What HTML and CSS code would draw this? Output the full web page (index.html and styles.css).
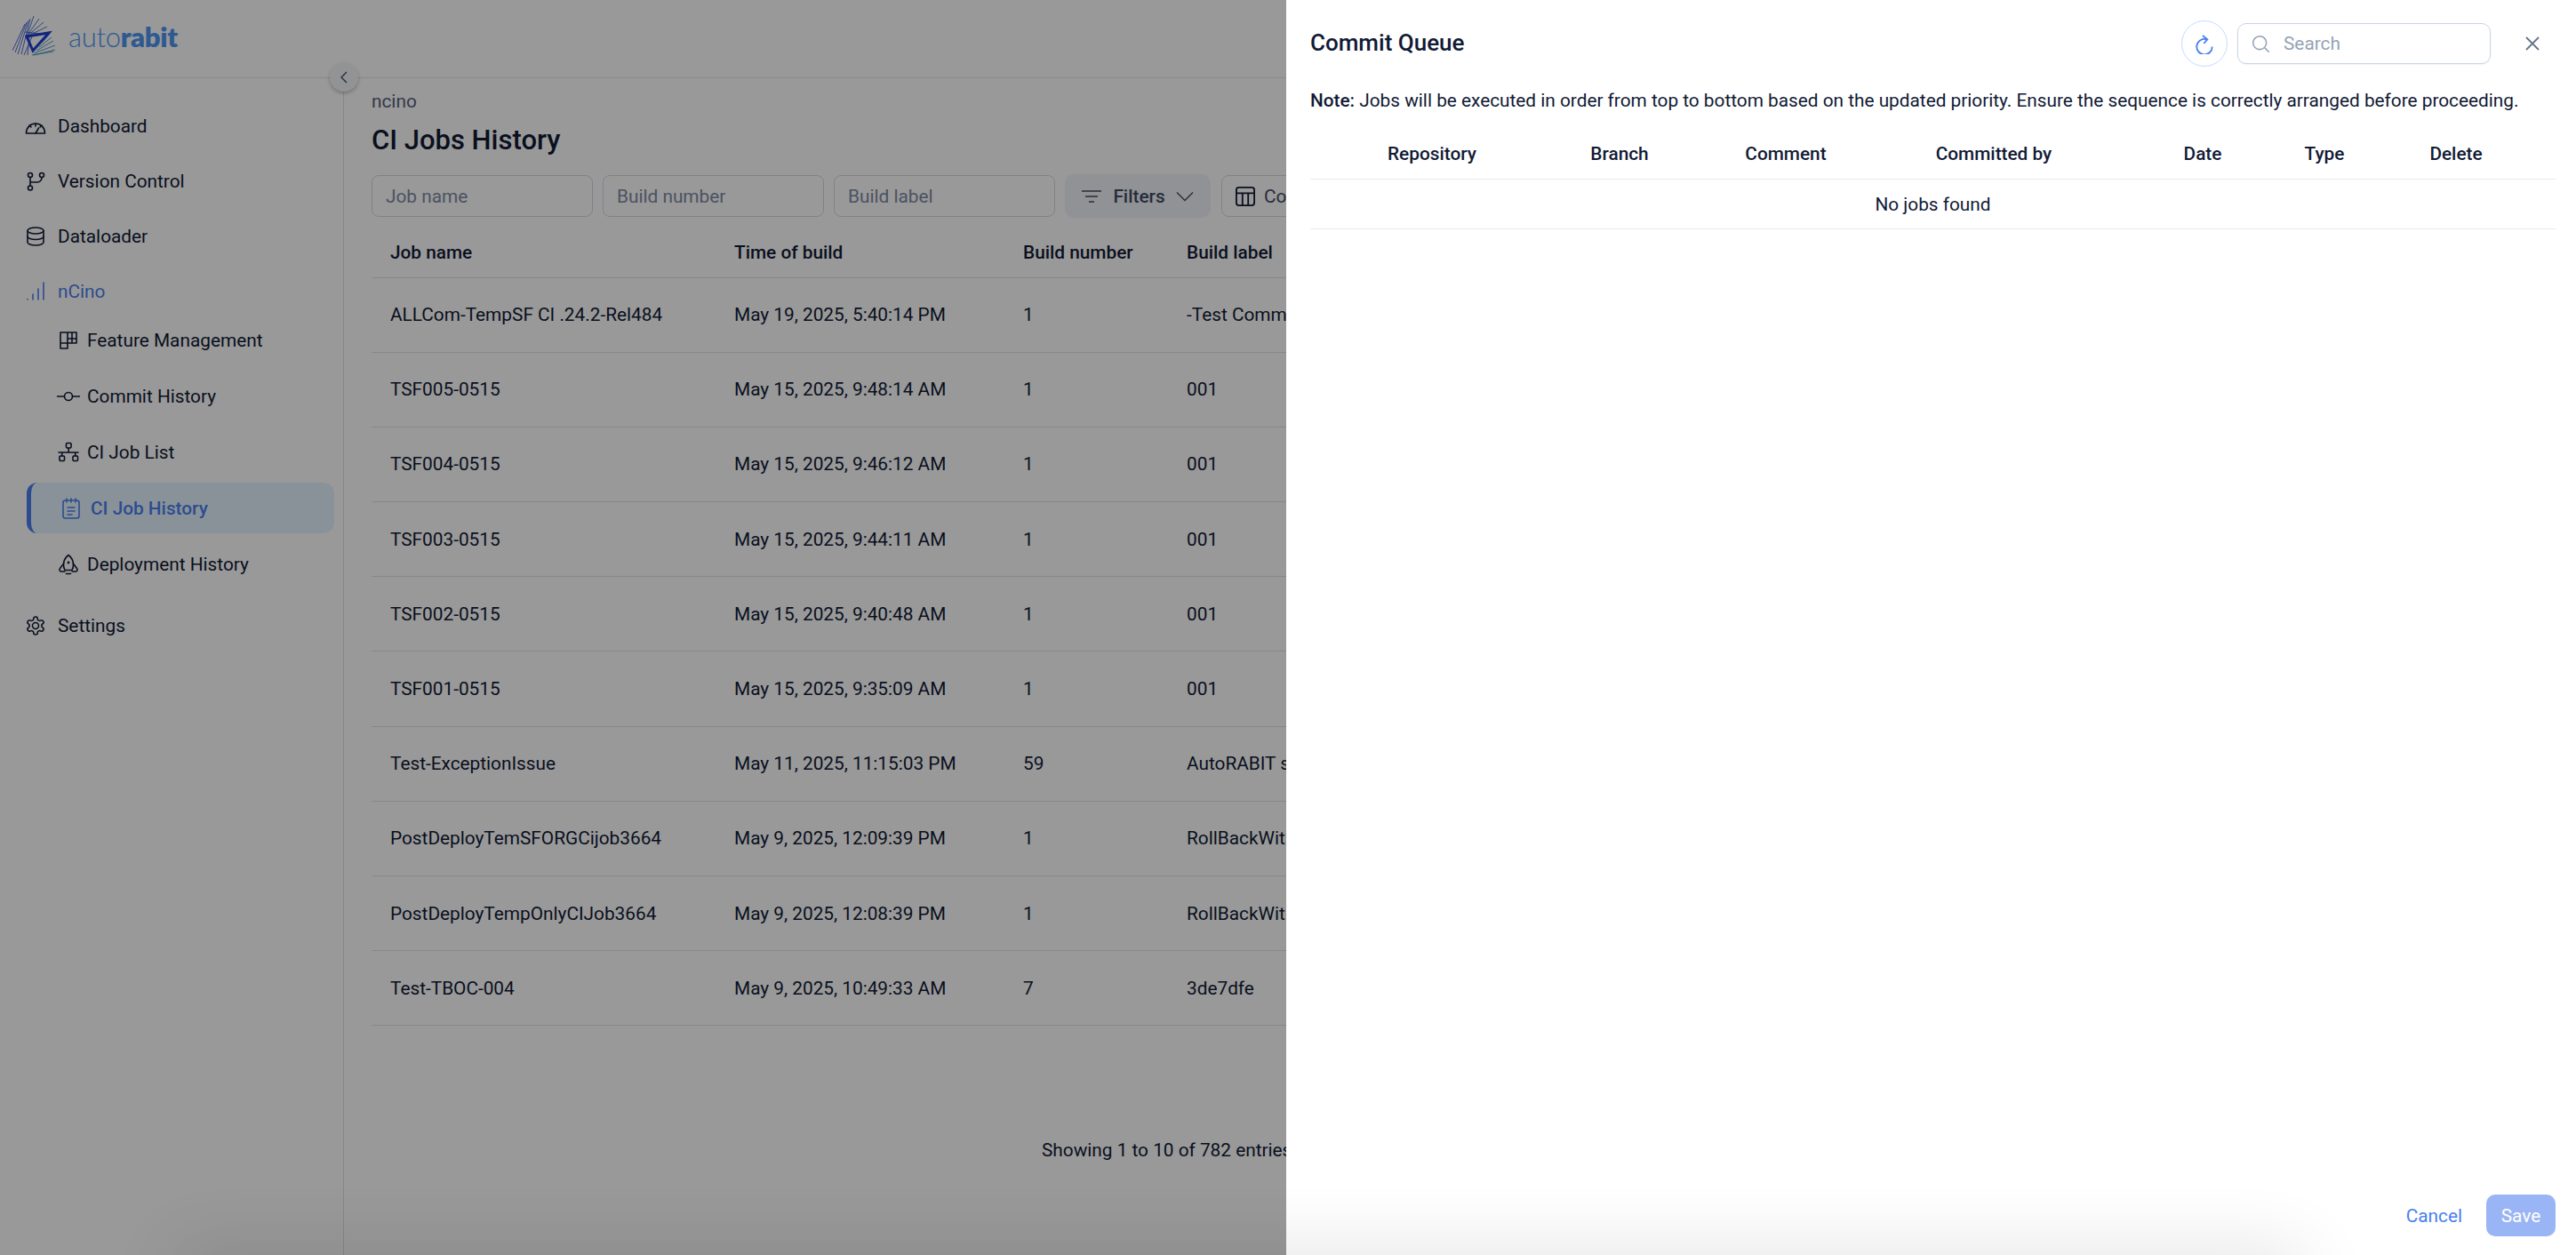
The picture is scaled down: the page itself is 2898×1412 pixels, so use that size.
FILE: index.html
```html
<!DOCTYPE html>
<html lang="en">
<head>
    <meta charset="UTF-8">
    <title>CI Jobs History</title>
    <link rel="stylesheet" href="styles.css">
</head>
<body>
    <div class="app">
        <header class="topbar">
            <svg class="logo-mark" viewBox="0 0 50 46" fill="none" stroke-width="0.8">
                <g stroke="#2547c9">
                    <path d="M0 39 L14 9 M3 41 L16 7 M6 43 L18 5 M10 43 L20 3 M13 44 L23 21 M17 44 L19 23"/>
                </g>
                <g stroke="#2a55c4">
                    <path d="M16 23 L24 0 M16 23 L30 3 M16 23 L35 7 M16 23 L39 12 M16 23 L42 18 M14 18 L41 21"/>
                </g>
                <g stroke="#2f86b8">
                    <path d="M24 44 L48 38 M24 42 L48 33 M27 39 L46 28 M30 35 L44 24 M33 30 L42 20 M22 44 L46 40"/>
                </g>
                <path d="M16 23 L41 19 L23 39 Z" stroke="#1d3fcf" stroke-width="3"/>
            </svg>
            <span class="logo-text">auto<b>rabit</b></span>
        </header>

        <div class="layout">
            <nav class="sidebar">
                <a class="nav-item">
                    <svg class="icon" viewBox="0 0 24 24"><path d="M1.5 19.5a10.5 10.5 0 0 1 21 0v.5h-21z"/><path d="M12 20l3.5-6M5 11l2 2M12 9v3M19 11l-2 2"/></svg>
                    Dashboard
                </a>
                <a class="nav-item">
                    <svg class="icon" viewBox="0 0 24 24"><circle cx="6" cy="5" r="2.5"/><circle cx="6" cy="19.5" r="2.5"/><circle cx="19" cy="5" r="2.5"/><path d="M6 7.5v9.5M6 13h8a5 5 0 0 0 5-5v-.5"/></svg>
                    Version Control
                </a>
                <a class="nav-item">
                    <svg class="icon" viewBox="0 0 24 24"><ellipse cx="12" cy="5.5" rx="9" ry="3.5"/><path d="M3 5.500v13a9 3.500 0 0 0 18 0v-13"/><path d="M3 12a9 3.500 0 0 0 18 0"/></svg>
                    Dataloader
                </a>
                <a class="nav-item nav-group">
                    <svg class="icon" viewBox="0 0 24 24"><path d="M3 21v-.5M9 21v-6M15 21V9M21 21V2"/></svg>
                    nCino
                </a>
                <div class="sub-nav">
                    <a class="sub-item">
                        <svg class="icon" viewBox="0 0 24 24"><path d="M3 3h18v12H3zM3 3v18h8V3M11 10h10M16 3v12"/></svg>
                        Feature Management
                    </a>
                    <a class="sub-item">
                        <svg class="icon icon-wide" viewBox="0 0 26 24"><circle cx="13" cy="12" r="4.500"/><path d="M0.500 12h8M17.500 12h8"/></svg>
                        Commit History
                    </a>
                    <a class="sub-item">
                        <svg class="icon icon-wide" viewBox="0 0 24 24"><rect x="9.500" y="1.500" width="5.500" height="5.500" rx="1"/><rect x="2" y="16" width="5.500" height="5.500" rx="1"/><rect x="17" y="16" width="5.500" height="5.500" rx="1"/><path d="M12.200 7v5M1 12h22M4.700 12v4M19.700 12v4"/></svg>
                        CI Job List
                    </a>
                    <a class="sub-item active">
                        <svg class="icon" viewBox="0 0 24 24"><rect x="3" y="3" width="18" height="20" rx="2.500"/><path d="M7 1v4M12 1v4M17 1v4M8 11h8M8 15h8M8 19h5"/></svg>
                        CI Job History
                    </a>
                    <a class="sub-item">
                        <svg class="icon" viewBox="0 0 24 24"><path d="M12 1.500c4 3 5.500 7 5.500 11 0 2-.5 4-1.500 6H8c-1-2-1.500-4-1.500-6 0-4 1.500-8 5.500-11z"/><path d="M6.700 11L2.500 16.500c-1 1.500-.5 3 1 3.500L8 20M17.300 11l4.200 5.500c1 1.500.5 3-1 3.500L16 20M9.500 22.500h5"/><circle cx="12" cy="10" r="0.600"/></svg>
                        Deployment History
                    </a>
                </div>
                <a class="nav-item nav-settings">
                    <svg class="icon" viewBox="0 0 24 24"><path d="M12.220 2h-.44a2 2 0 0 0-2 2v.18a2 2 0 0 1-1 1.730l-.43.25a2 2 0 0 1-2 0l-.15-.08a2 2 0 0 0-2.730.73l-.22.38a2 2 0 0 0 .73 2.730l.15.1a2 2 0 0 1 1 1.720v.51a2 2 0 0 1-1 1.740l-.15.09a2 2 0 0 0-.73 2.730l.22.38a2 2 0 0 0 2.730.73l.15-.08a2 2 0 0 1 2 0l.43.25a2 2 0 0 1 1 1.730V20a2 2 0 0 0 2 2h.44a2 2 0 0 0 2-2v-.18a2 2 0 0 1 1-1.730l.43-.25a2 2 0 0 1 2 0l.15.08a2 2 0 0 0 2.730-.73l.22-.39a2 2 0 0 0-.73-2.730l-.15-.08a2 2 0 0 1-1-1.740v-.5a2 2 0 0 1 1-1.740l.15-.09a2 2 0 0 0 .73-2.730l-.22-.38a2 2 0 0 0-2.730-.73l-.15.08a2 2 0 0 1-2 0l-.43-.25a2 2 0 0 1-1-1.730V4a2 2 0 0 0-2-2z"/><circle cx="12" cy="12" r="3.500"/></svg>
                    Settings
                </a>
            </nav>

            <main class="content">
                <div class="crumb">ncino</div>
                <h1 class="page-title">CI Jobs History</h1>

                <div class="toolbar">
                    <div class="field">Job name</div>
                    <div class="field">Build number</div>
                    <div class="field">Build label</div>
                    <button class="filter-btn">
                        <svg class="filter-icon" viewBox="0 0 24 24"><path d="M1 6h22M5 12h14M9 18h6"/></svg>
                        Filters
                        <svg class="tool-icon" viewBox="0 0 24 24"><path d="M1.200 6.600L12 17.400 22.800 6.600"/></svg>
                    </button>
                    <button class="columns-btn">
                        <svg class="columns-icon" viewBox="0 0 24 24"><rect x="1" y="1" width="22" height="22" rx="3"/><path d="M1 8h22M8.500 8v15M15.500 8v15"/></svg>
                        Columns
                    </button>
                </div>

                <table class="jobs">
                    <thead>
                        <tr><th>Job name</th><th>Time of build</th><th>Build number</th><th>Build label</th></tr>
                    </thead>
                    <tbody>
                        <tr><td>ALLCom-TempSF CI .24.2-Rel484</td><td>May 19, 2025, 5:40:14 PM</td><td>1</td><td>-Test Commit</td></tr>
                        <tr><td>TSF005-0515</td><td>May 15, 2025, 9:48:14 AM</td><td>1</td><td>001</td></tr>
                        <tr><td>TSF004-0515</td><td>May 15, 2025, 9:46:12 AM</td><td>1</td><td>001</td></tr>
                        <tr><td>TSF003-0515</td><td>May 15, 2025, 9:44:11 AM</td><td>1</td><td>001</td></tr>
                        <tr><td>TSF002-0515</td><td>May 15, 2025, 9:40:48 AM</td><td>1</td><td>001</td></tr>
                        <tr><td>TSF001-0515</td><td>May 15, 2025, 9:35:09 AM</td><td>1</td><td>001</td></tr>
                        <tr><td>Test-ExceptionIssue</td><td>May 11, 2025, 11:15:03 PM</td><td>59</td><td>AutoRABIT sync</td></tr>
                        <tr><td>PostDeployTemSFORGCijob3664</td><td>May 9, 2025, 12:09:39 PM</td><td>1</td><td>RollBackWithCommit</td></tr>
                        <tr><td>PostDeployTempOnlyCIJob3664</td><td>May 9, 2025, 12:08:39 PM</td><td>1</td><td>RollBackWithCommit</td></tr>
                        <tr><td>Test-TBOC-004</td><td>May 9, 2025, 10:49:33 AM</td><td>7</td><td>3de7dfe</td></tr>
                    </tbody>
                </table>

                <div class="table-footer">Showing 1 to 10 of 782 entries</div>
            </main>
        </div>

        <button class="collapse-btn">
            <svg viewBox="0 0 12 16"><path d="M9 2L3 8l6 6"/></svg>
        </button>
    </div>

    <div class="scrim"></div>

    <aside class="drawer">
        <div class="drawer-head">
            <h2 class="drawer-title">Commit Queue</h2>
            <button class="refresh-btn">
                <svg viewBox="0 0 24 24"><path d="M14.500 7.300A8.700 8.700 0 1 0 20.700 15.500"/><path d="M10 3l5.300 4.300L11.300 12"/></svg>
            </button>
            <div class="search">
                <svg viewBox="0 0 24 24"><circle cx="10.500" cy="10.500" r="8.500"/><path d="M17 17l5.500 5.500"/></svg>
                Search
            </div>
            <button class="close-btn">
                <svg viewBox="0 0 16 16"><path d="M1 1l14 14M15 1L1 15"/></svg>
            </button>
        </div>

        <p class="note"><b>Note:</b> Jobs will be executed in order from top to bottom based on the updated priority. Ensure the sequence is correctly arranged before proceeding.</p>

        <div class="queue-head">
            <span>Repository</span>
            <span>Branch</span>
            <span>Comment</span>
            <span>Committed by</span>
            <span>Date</span>
            <span>Type</span>
            <span>Delete</span>
        </div>
        <div class="queue-empty">No jobs found</div>

        <div class="drawer-foot">
            <button class="cancel-btn">Cancel</button>
            <button class="save-btn">Save</button>
        </div>
    </aside>

    <div class="bottom-shade"></div>
</body>
</html>
```

FILE: styles.css
```css
* {
    box-sizing: border-box;
    margin: 0;
    padding: 0;
}

body {
    height: 100vh;
    overflow: hidden;
    background-color: #fff;
    color: #111a35;
    font-family: Roboto, "Liberation Sans", sans-serif;
    font-size: 20.8px;
}

button {
    font-family: inherit;
    border: none;
    background: none;
}

/* page behind the drawer */
.app {
    height: 100%;
    display: flex;
    flex-direction: column;
}

.topbar {
    height: 88px;
    flex-shrink: 0;
    display: flex;
    align-items: center;
    padding: 0 0 6px 14px;
    border-bottom: 1px solid #e2e4e8;
}

.logo-mark {
    width: 50px;
    height: 46px;
}

.logo-text {
    margin-left: 13px;
    font-family: Lato, sans-serif;
    font-size: 31px;
    font-weight: 300;
    letter-spacing: -0.3px;
    color: #4f96f0;
}

.logo-text b {
    font-weight: 800;
}

.layout {
    flex: 1;
    display: flex;
    min-height: 0;
}

.sidebar {
    width: 387px;
    flex-shrink: 0;
    padding: 23px 10px 0 30px;
    border-right: 1px solid #dfe1e5;
}

.icon {
    width: 24px;
    height: 24px;
    flex-shrink: 0;
    fill: none;
    stroke: currentColor;
    stroke-width: 1.6;
    stroke-linecap: round;
    stroke-linejoin: round;
}

.icon-wide {
    width: 26px;
    margin: 0 -1px;
}

.nav-item {
    height: 62px;
    display: flex;
    align-items: center;
    gap: 13px;
    margin-left: -2px;
    color: #111a35;
}

.nav-group {
    height: 50px;
    margin-top: 6px;
    color: #4a7ff0;
}

.nav-settings {
    margin-top: 10px;
}

.sub-nav {
    display: flex;
    flex-direction: column;
    gap: 6px;
    margin-top: 1px;
}

.sub-item {
    height: 57px;
    display: flex;
    align-items: center;
    gap: 9px;
    padding-left: 35px;
    color: #111a35;
}

.sub-item.active {
    gap: 10px;
    padding-left: 33px;
    border-left: 5px solid #4a7ff0;
    border-radius: 12px;
    background-color: #e6f4ff;
    color: #4a7ff0;
    font-weight: 500;
}

.content {
    flex: 1;
    min-width: 0;
    padding: 14px 0 0 31px;
}

.crumb {
    line-height: 24px;
    color: #55607a;
}

.page-title {
    margin-top: 12px;
    font-size: 31px;
    font-weight: 500;
    line-height: 40px;
}

.toolbar {
    display: flex;
    align-items: center;
    gap: 11px;
    margin-top: 18px;
    width: 1400px;
}

.field {
    width: 249px;
    height: 47px;
    display: flex;
    align-items: center;
    padding-left: 15px;
    border: 1px solid #d3dbe6;
    border-radius: 8px;
    color: #7d8aa3;
}

.filter-btn,
.columns-btn {
    display: flex;
    align-items: center;
    font-size: 20.8px;
    color: #3f4a63;
}

.filter-btn {
    width: 164px;
    height: 49px;
    padding: 0 19px 0 18px;
    justify-content: space-between;
    border-radius: 10px;
    background-color: #f0f3f8;
    font-weight: 500;
}

.columns-btn {
    width: 180px;
    height: 47px;
    gap: 10px;
    margin-left: 1px;
    padding-left: 15px;
    border: 1px solid #d3dbe6;
    border-radius: 8px;
}

.filter-icon {
    width: 24px;
    height: 24px;
    flex-shrink: 0;
    fill: none;
    stroke: currentColor;
    stroke-width: 1.400;
}

.tool-icon {
    width: 20px;
    height: 20px;
    flex-shrink: 0;
    fill: none;
    stroke: currentColor;
    stroke-width: 1.600;
}

.columns-icon {
    width: 22px;
    height: 22px;
    flex-shrink: 0;
    fill: none;
    stroke: #111a35;
    stroke-width: 2;
}

.jobs {
    margin-top: 17px;
    width: 1400px;
    table-layout: fixed;
    border-collapse: collapse;
}

.jobs th,
.jobs td {
    padding: 0 21px;
    text-align: left;
    border-bottom: 1px solid #dfe1e5;
    white-space: nowrap;
}

.jobs th {
    height: 50px;
    padding-bottom: 6px;
    font-weight: 500;
}

.jobs td {
    height: 84.2px;
}

.jobs th:nth-child(1) {
    width: 387px;
}

.jobs th:nth-child(2) {
    width: 325px;
}

.jobs th:nth-child(3) {
    width: 184px;
}

.table-footer {
    margin-top: 128px;
    padding-left: 754px;
    line-height: 24px;
}

.collapse-btn {
    position: absolute;
    left: 371px;
    top: 71px;
    width: 32px;
    height: 32px;
    display: flex;
    align-items: center;
    justify-content: center;
    border-radius: 50%;
    background-color: #f4f6f9;
    box-shadow: 0 2px 4px rgba(0, 0, 0, 0.25);
}

.collapse-btn svg {
    width: 12px;
    height: 16px;
    fill: none;
    stroke: #3f4a63;
    stroke-width: 1.400;
}

/* overlay */
.scrim {
    position: absolute;
    inset: 0;
    background-color: rgba(0, 0, 0, 0.4);
}

.drawer {
    position: absolute;
    top: 0;
    right: 0;
    bottom: 0;
    width: 1451px;
    display: flex;
    flex-direction: column;
    padding: 0 23px 21px 27px;
    background-color: #fff;
}

.drawer-head {
    height: 98px;
    flex-shrink: 0;
    display: flex;
    align-items: center;
}

.drawer-title {
    flex: 1;
    padding-bottom: 2px;
    font-size: 26px;
    font-weight: 500;
}

.refresh-btn {
    width: 52px;
    height: 52px;
    display: flex;
    align-items: center;
    justify-content: center;
    border: 1px solid #c5dcff;
    border-radius: 50%;
}

.refresh-btn svg {
    width: 24px;
    height: 24px;
    fill: none;
    stroke: #4a7ff0;
    stroke-width: 1.800;
}

.search {
    width: 285px;
    height: 46px;
    margin-left: 11px;
    display: flex;
    align-items: center;
    gap: 15px;
    padding-left: 15px;
    border: 1px solid #c9d4e3;
    border-radius: 10px;
    box-shadow: 0 1px 2px rgba(15, 23, 42, 0.06);
    color: #94a3b8;
}

.search svg {
    width: 21px;
    height: 21px;
    flex-shrink: 0;
    fill: none;
    stroke: #94a3b8;
    stroke-width: 1.800;
}

.close-btn {
    width: 24px;
    height: 24px;
    margin: 0 14px 0 35px;
    display: flex;
    align-items: center;
    justify-content: center;
}

.close-btn svg {
    width: 16px;
    height: 16px;
    fill: none;
    stroke: #64748b;
    stroke-width: 1.800;
}

.note {
    line-height: 30px;
    margin-bottom: 26px;
}

.note b {
    font-weight: 500;
}

.queue-head {
    height: 48px;
    flex-shrink: 0;
    display: grid;
    grid-template-columns: 246px 176px 198px 270px 200px 74px 222px;
    padding: 0 0 10px 14px;
    align-items: center;
    justify-items: center;
    border-bottom: 1px solid #e8eaee;
    font-weight: 500;
}

.queue-empty {
    height: 56px;
    flex-shrink: 0;
    display: flex;
    align-items: center;
    justify-content: center;
    border-bottom: 1px solid #e8eaee;
}

.drawer-foot {
    margin-top: auto;
    display: flex;
    align-items: center;
    justify-content: flex-end;
    gap: 27px;
}

.cancel-btn {
    font-size: 20.8px;
    color: #4a7ff0;
}

.save-btn {
    width: 78px;
    height: 47px;
    border-radius: 10px;
    background-color: #9ab5f5;
    font-size: 20.8px;
    color: #fff;
}

/* soft shadow rising from below the window */
.bottom-shade {
    position: absolute;
    left: 200px;
    top: 100%;
    width: 2390px;
    height: 40px;
    box-shadow: 0 0 80px rgba(0, 0, 0, 0.16);
}
```
